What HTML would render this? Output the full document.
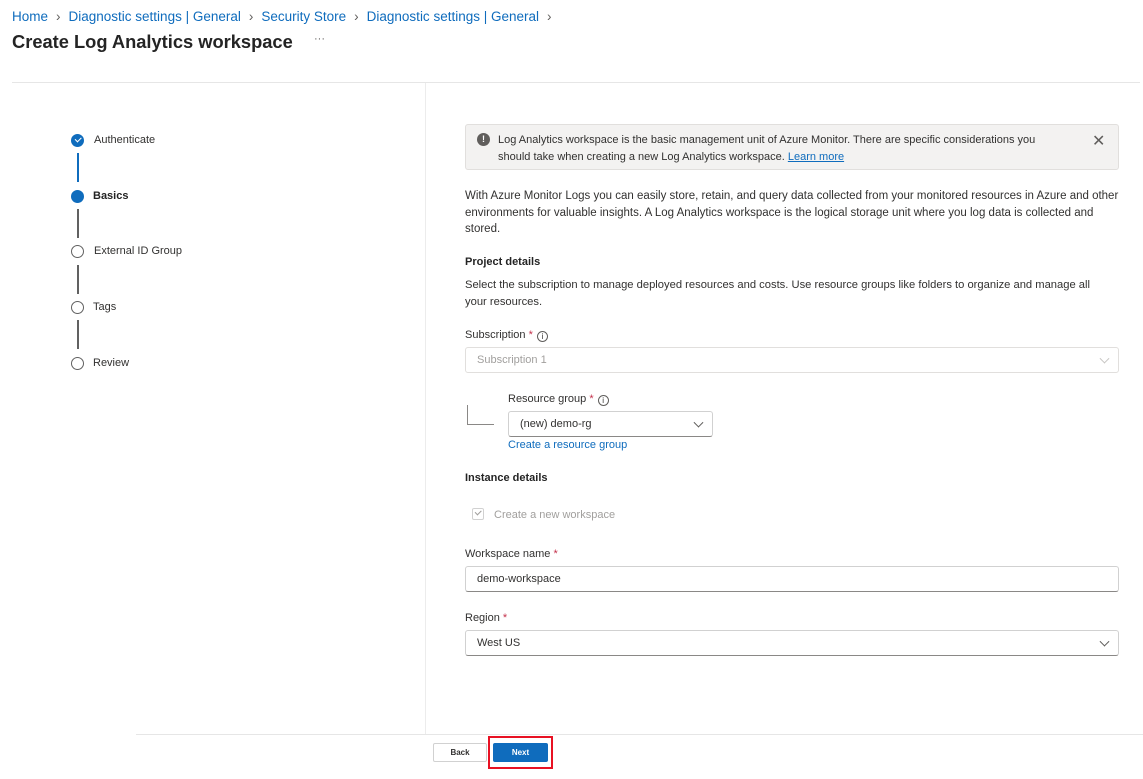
<!DOCTYPE html>
<html><head><style>
*{box-sizing:border-box;margin:0;padding:0}
body{width:1143px;height:779px;background:#fff;font-family:"Liberation Sans",sans-serif;color:#323130;position:relative;overflow:hidden;font-size:11px}
.a{position:absolute;white-space:nowrap}
.bc{top:9px;left:12px;font-size:13.5px;color:#0f6cbd}
.bc span.s{color:#605e5c;margin:0 8px}
.t{top:31px;left:12px;font-size:18.3px;font-weight:bold;color:#242424}
.step{left:94px;font-size:11px}
.dot{position:absolute;left:71px;width:13px;height:13px;border-radius:50%;border:1.3px solid #616161;background:#fff}
.vl{position:absolute;left:77px;width:2px;background:#616161}
.p{left:465px;font-size:11px;line-height:16.5px;white-space:normal;color:#323130}
.blue{color:#0f6cbd}
.h{font-weight:bold;color:#242424}
.in{position:absolute;border:1px solid #d1d1d1;border-radius:3px;background:#fff;font-size:11px;padding-left:11px;display:flex;align-items:center;border-bottom-color:#8a8886}
.chev{position:absolute;right:10px;top:50%;width:7px;height:7px;border-right:1.2px solid #605e5c;border-bottom:1.2px solid #605e5c;transform:translateY(-70%) rotate(45deg)}
.req{color:#c4314b}
.info{display:inline-block;width:11px;height:11px;border:1px solid #605e5c;border-radius:50%;font-size:8px;text-align:center;line-height:9px;vertical-align:-1px;margin-left:4px}
</style></head><body>
<div class="a bc">Home<span class="s">›</span>Diagnostic settings | General<span class="s">›</span>Security Store<span class="s">›</span>Diagnostic settings | General<span class="s">›</span></div>
<div class="a t">Create Log Analytics workspace</div>
<div class="a" style="top:33px;left:314px;font-size:11px;color:#605e5c">···</div>
<div class="a" style="top:82px;left:12px;width:1128px;height:1px;background:#e6e6e6"></div>
<div class="a" style="top:83px;left:425px;width:1px;height:651px;background:#ececec"></div>
<div class="a" style="top:734px;left:136px;width:1007px;height:1px;background:#e6e6e6"></div>

<div class="dot" style="top:134px;background:#0f6cbd;border-color:#0f6cbd"></div>
<div class="a" style="top:137px;left:74.5px;width:6px;height:3.5px;border-left:1.2px solid #fff;border-bottom:1.2px solid #fff;transform:rotate(-45deg)"></div>
<div class="vl" style="top:153px;height:29px;background:#0f6cbd"></div>
<div class="dot" style="top:190px;background:#0f6cbd;border-color:#0f6cbd"></div>
<div class="vl" style="top:209px;height:29px"></div>
<div class="dot" style="top:245px"></div>
<div class="vl" style="top:265px;height:29px"></div>
<div class="dot" style="top:301px"></div>
<div class="vl" style="top:320px;height:29px"></div>
<div class="dot" style="top:357px"></div>
<div class="a step" style="top:134px">Authenticate</div>
<div class="a step" style="top:190px;left:93px;font-weight:bold;color:#242424">Basics</div>
<div class="a step" style="top:245px">External ID Group</div>
<div class="a step" style="top:301px;left:93px">Tags</div>
<div class="a step" style="top:357px;left:93px">Review</div>

<div class="a" style="top:124px;left:465px;width:654px;height:46px;background:#f3f2f1;border:1px solid #e1dfdd;border-radius:3px"></div>
<div class="a" style="top:133px;left:477px;width:13px;height:13px;border-radius:50%;background:#605e5c;color:#fff;font-size:9px;text-align:center;line-height:13px;font-weight:bold">!</div>
<div class="a p" style="top:132px;left:498px;width:562px;line-height:16.5px">Log Analytics workspace is the basic management unit of Azure Monitor. There are specific considerations you should take when creating a new Log Analytics workspace. <span class="blue" style="text-decoration:underline">Learn more</span></div>
<div class="a" style="top:131px;left:1092px;font-size:16px;color:#605e5c">✕</div>

<div class="a p" style="top:188px;width:660px;font-size:11.5px">With Azure Monitor Logs you can easily store, retain, and query data collected from your monitored resources in Azure and other environments for valuable insights. A Log Analytics workspace is the logical storage unit where you log data is collected and stored.</div>
<div class="a p h" style="top:254px">Project details</div>
<div class="a p" style="top:277px;width:645px;font-size:11.2px">Select the subscription to manage deployed resources and costs. Use resource groups like folders to organize and manage all your resources.</div>
<div class="a p" style="top:327px">Subscription <span class="req">*</span><span class="info">i</span></div>
<div class="in" style="top:347px;left:465px;width:654px;height:26px;color:#a19f9d;border-color:#e1dfdd"><span>Subscription 1</span><span class="chev" style="border-color:#c8c6c4"></span></div>
<div class="a" style="top:405px;left:467px;width:27px;height:20px;border-left:1px solid #8a8886;border-bottom:1px solid #8a8886"></div>
<div class="a p" style="top:391px;left:508px">Resource group <span class="req">*</span><span class="info">i</span></div>
<div class="in" style="top:411px;left:508px;width:205px;height:26px"><span>(new) demo-rg</span><span class="chev"></span></div>
<div class="a p blue" style="top:437px;left:508px">Create a resource group</div>
<div class="a p h" style="top:470px">Instance details</div>
<div class="a" style="top:508px;left:472px;width:12px;height:12px;border:1px solid #d1d1d1;border-radius:2px"></div>
<div class="a" style="top:510px;left:475px;width:6px;height:3.5px;border-left:1px solid #a19f9d;border-bottom:1px solid #a19f9d;transform:rotate(-45deg)"></div>
<div class="a p" style="top:507px;left:494px;color:#a19f9d">Create a new workspace</div>
<div class="a p" style="top:546px">Workspace name <span class="req">*</span></div>
<div class="in" style="top:566px;left:465px;width:654px;height:26px"><span>demo-workspace</span></div>
<div class="a p" style="top:610px">Region <span class="req">*</span></div>
<div class="in" style="top:630px;left:465px;width:654px;height:26px"><span>West US</span><span class="chev"></span></div>

<div class="a" style="top:743px;left:433px;width:54px;height:19px;border:1px solid #d1d1d1;border-radius:2px;font-size:8px;font-weight:bold;text-align:center;line-height:17px">Back</div>
<div class="a" style="top:736px;left:488px;width:65px;height:33px;border:2px solid #e81123"></div>
<div class="a" style="top:743px;left:493px;width:55px;height:19px;background:#0f6cbd;border-radius:2px;color:#fff;font-size:8px;font-weight:bold;text-align:center;line-height:19px">Next</div>
</body></html>
